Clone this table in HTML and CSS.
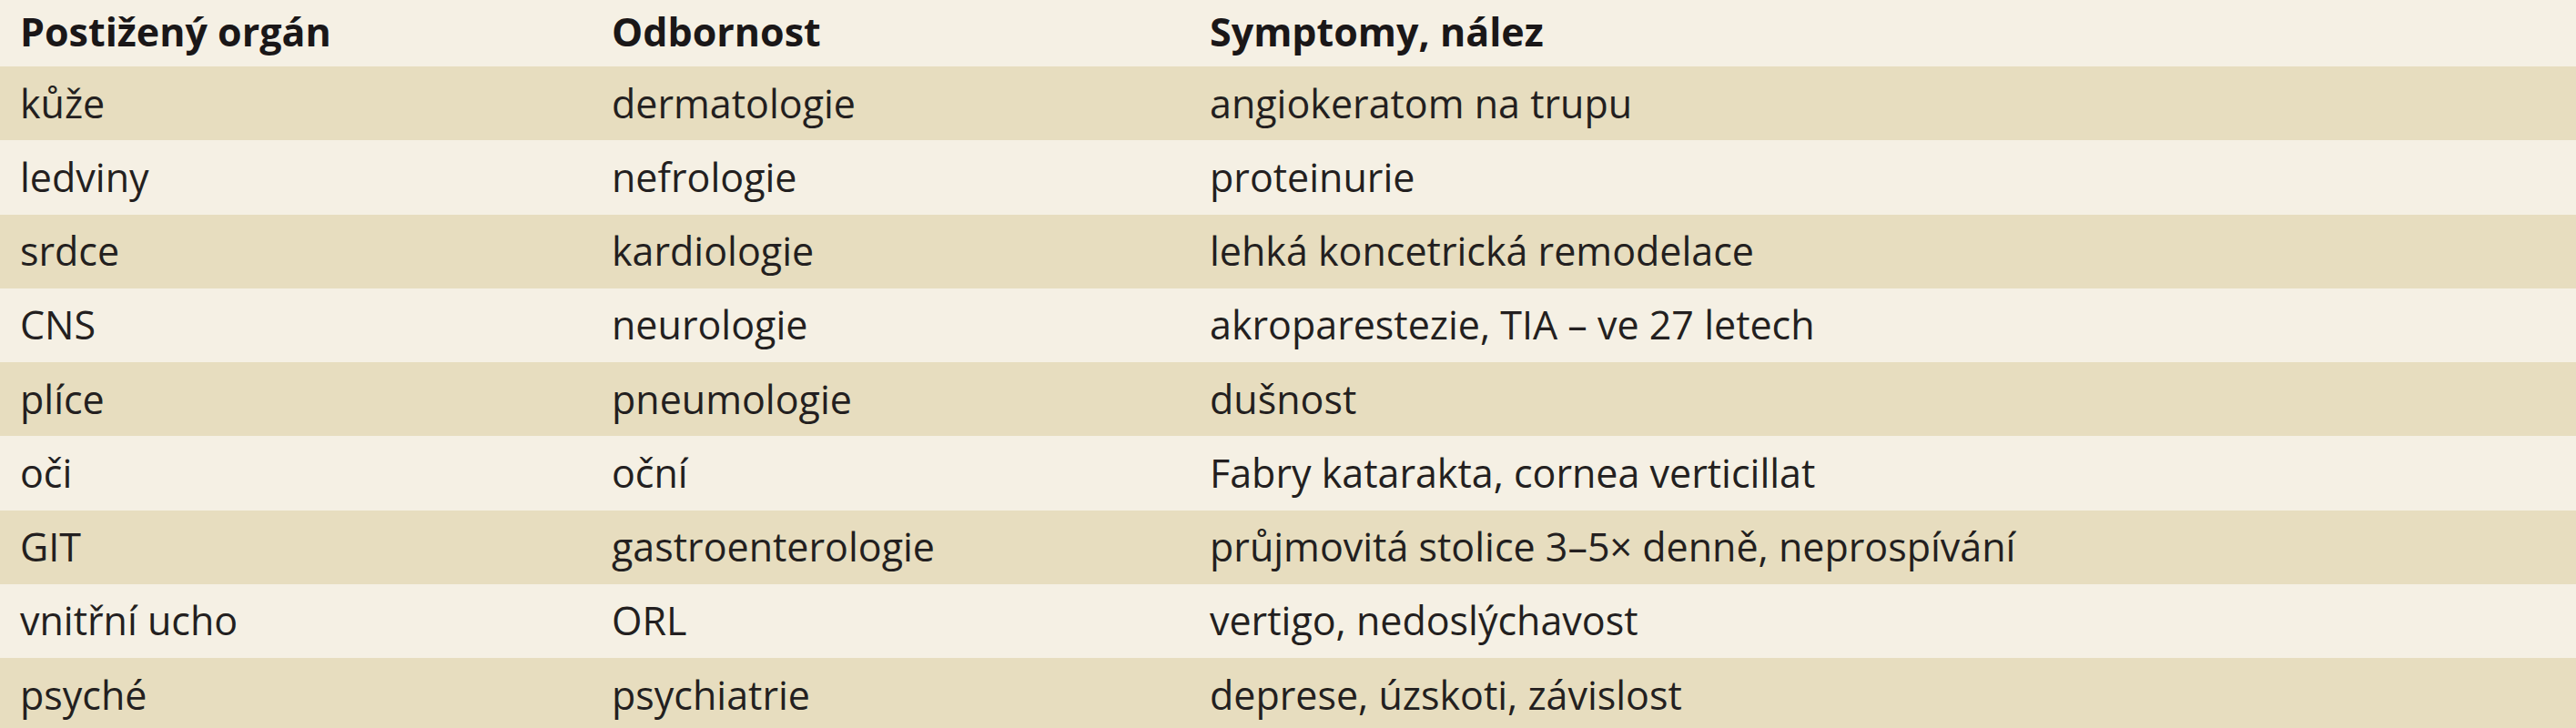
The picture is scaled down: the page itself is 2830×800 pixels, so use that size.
FILE: index.html
```html
<!DOCTYPE html>
<html lang="cs">
<head>
<meta charset="utf-8">
<title>Postižené orgány</title>
<link rel="stylesheet" href="styles.css">
</head>
<body>
<table class="tbl">
  <colgroup>
    <col class="c1"><col class="c2"><col class="c3">
  </colgroup>
  <thead>
    <tr class="head"><th>Postižený orgán</th><th>Odbornost</th><th>Symptomy, nález</th></tr>
  </thead>
  <tbody>
    <tr class="dark"><td>kůže</td><td>dermatologie</td><td>angiokeratom na trupu</td></tr>
    <tr class="light"><td>ledviny</td><td>nefrologie</td><td>proteinurie</td></tr>
    <tr class="dark"><td>srdce</td><td>kardiologie</td><td>lehká koncetrická remodelace</td></tr>
    <tr class="light"><td>CNS</td><td>neurologie</td><td>akroparestezie, TIA – ve 27 letech</td></tr>
    <tr class="dark"><td>plíce</td><td>pneumologie</td><td>dušnost</td></tr>
    <tr class="light"><td>oči</td><td>oční</td><td>Fabry katarakta, cornea verticillat</td></tr>
    <tr class="dark"><td>GIT</td><td>gastroenterologie</td><td>průjmovitá stolice 3–5× denně, neprospívání</td></tr>
    <tr class="light"><td>vnitřní ucho</td><td>ORL</td><td>vertigo, nedoslýchavost</td></tr>
    <tr class="dark"><td>psyché</td><td>psychiatrie</td><td>deprese, úzskoti, závislost</td></tr>
  </tbody>
</table>
</body>
</html>
```
FILE: styles.css
```css
html, body {
  margin: 0;
  padding: 0;
  background: #f5f0e4;
}
body {
  font-family: "Open Sans", "Noto Sans", "Liberation Sans", sans-serif;
  font-size: 43px;
  color: #231f20;
}
.tbl {
  width: 100%;
  border-collapse: collapse;
  border-spacing: 0;
  table-layout: fixed;
}
.c1 { width: 650px; }
.c2 { width: 657px; }
.tbl th,
.tbl td {
  padding: 0 0 0 22px;
  text-align: left;
  vertical-align: middle;
  white-space: nowrap;
  line-height: 58px;
}
.head th {
  height: 73px;
  font-weight: 700;
  color: #1a1718;
  padding-bottom: 4px;
  box-sizing: border-box;
}
.tbl td {
  height: 81.25px;
  box-sizing: border-box;
}
.dark { background: #e7ddbf; }
.light { background: #f5f0e4; }
```
